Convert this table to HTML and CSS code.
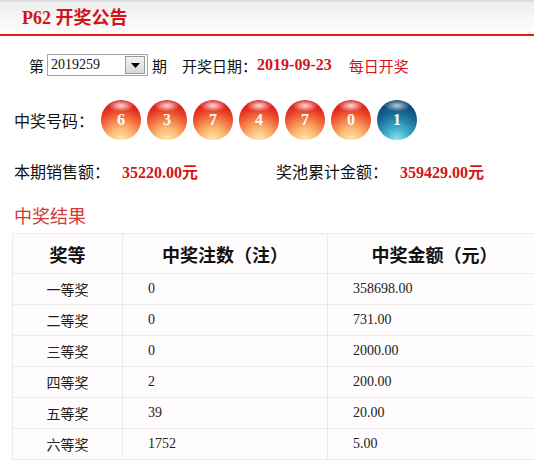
FILE: index.html
```html
<!DOCTYPE html>
<html lang="zh">
<head>
<meta charset="utf-8">
<link rel="stylesheet" href="styles.css">
</head>
<body>
<div class="page">
  <div class="topbar"><h1 class="title">P62 开奖公告</h1></div>
  <div class="issue-row">
    <span class="lbl">第</span>
    <div class="select"><span class="sel-val">2019259</span><span class="sel-btn"><svg width="9" height="5" viewBox="0 0 9 5"><path d="M0 0H9L4.5 5Z" fill="#000"/></svg></span></div>
    <span class="lbl">期</span>
    <span class="lbl date-lbl">开奖日期：</span><span class="date">2019-09-23</span>
    <span class="daily">每日开奖</span>
  </div>
  <div class="balls-row">
    <span class="big-lbl">中奖号码：</span>
    <div class="balls">
      <span class="ball red">6</span>
      <span class="ball red">3</span>
      <span class="ball red">7</span>
      <span class="ball red">4</span>
      <span class="ball red">7</span>
      <span class="ball red">0</span>
      <span class="ball blue">1</span>
    </div>
  </div>
  <div class="money-row">
    <div class="money"><span class="big-lbl">本期销售额：</span><span class="amt">35220.00元</span></div>
    <div class="money pool"><span class="big-lbl">奖池累计金额：</span><span class="amt">359429.00元</span></div>
  </div>
  <h2 class="sub">中奖结果</h2>
  <table class="result">
    <thead>
      <tr><th class="c1">奖等</th><th class="c2">中奖注数（注）</th><th class="c3">中奖金额（元）</th></tr>
    </thead>
    <tbody>
      <tr><td class="c1">一等奖</td><td class="num">0</td><td class="num">358698.00</td></tr>
      <tr><td class="c1">二等奖</td><td class="num">0</td><td class="num">731.00</td></tr>
      <tr><td class="c1">三等奖</td><td class="num">0</td><td class="num">2000.00</td></tr>
      <tr><td class="c1">四等奖</td><td class="num">2</td><td class="num">200.00</td></tr>
      <tr><td class="c1">五等奖</td><td class="num">39</td><td class="num">20.00</td></tr>
      <tr><td class="c1">六等奖</td><td class="num">1752</td><td class="num">5.00</td></tr>
    </tbody>
  </table>
</div>
</body>
</html>
```

FILE: styles.css
```css
html, body {
  margin: 0;
  padding: 0;
  background: #fff;
  overflow: hidden;
}
body {
  font-family: "Liberation Serif", "Noto Sans CJK SC", serif;
  color: #222;
  width: 534px;
}
.page {
  width: 534px;
}
.topbar {
  height: 34px;
  border-bottom: 2px solid #e31d1a;
  background: linear-gradient(#d6d6d6 0, #eeeeee 3px, #f6f6f6 18px, #ffffff 34px);
  display: flex;
  align-items: center;
  padding-left: 22px;
}
.title {
  margin: 0;
  font-size: 18px;
  font-weight: bold;
  color: #d3151a;
  line-height: 1;
  padding-top: 2px;
}
.issue-row {
  display: flex;
  align-items: center;
  height: 22px;
  margin-top: 18px;
  padding-left: 29px;
  font-size: 15px;
}
.lbl {
  color: #111;
}
.select {
  margin: 0 4px 0 3px;
  width: 99px;
  height: 20px;
  border: 1px solid #a5a5a5;
  display: flex;
  align-items: center;
  background: #fff;
}
.sel-val {
  flex: 1;
  padding-left: 3px;
  font-size: 14px;
  color: #111;
}
.sel-btn {
  width: 18px;
  height: 16px;
  margin-right: 2px;
  border: 1px solid #9a9a9a;
  background: linear-gradient(#f4f4f4, #d6d6d6);
  display: flex;
  align-items: center;
  justify-content: center;
}
.date-lbl {
  margin-left: 15px;
}
.date {
  color: #d3151a;
  font-weight: bold;
  font-size: 16px;
}
.daily {
  color: #d3151a;
  margin-left: 17px;
}
.balls-row {
  display: flex;
  align-items: center;
  margin-top: 24px;
  padding-left: 14px;
  height: 40px;
}
.big-lbl {
  font-size: 16px;
  color: #111;
}
.balls {
  display: flex;
  gap: 6px;
  margin-left: 7px;
}
.ball {
  width: 40px;
  height: 40px;
  border-radius: 50%;
  display: flex;
  align-items: center;
  justify-content: center;
  color: #fff;
  font-weight: bold;
  font-size: 16px;
  font-family: "Liberation Serif", serif;
}
.ball.red {
  background:
    radial-gradient(ellipse 13px 6px at 50% 14%, rgba(255,255,255,0.85), rgba(255,255,255,0) 100%),
    radial-gradient(circle at 50% 100%, #ffe9b0 0%, #fbb56f 28%, #ef5a33 58%, #e0221a 78%, #cf1512 100%);
}
.ball.blue {
  background:
    radial-gradient(ellipse 13px 6px at 50% 14%, rgba(255,255,255,0.7), rgba(255,255,255,0) 100%),
    radial-gradient(circle at 50% 100%, #8ee4ef 0%, #3aaec8 28%, #1b6a98 58%, #0e4a7c 80%, #0a3a66 100%);
}
.money-row {
  display: flex;
  align-items: center;
  margin-top: 19px;
  padding-left: 14px;
  height: 24px;
}
.money {
  display: flex;
  align-items: baseline;
}
.pool {
  margin-left: 78px;
}
.amt {
  color: #d3151a;
  font-weight: bold;
  font-size: 16px;
  margin-left: 12px;
}
.sub {
  margin: 20px 0 0 14px;
  font-size: 18px;
  font-weight: normal;
  color: #d03a3a;
  font-family: "Noto Sans CJK SC", sans-serif;
  line-height: 24px;
}
.result {
  margin: 6px 0 0 12px;
  border-collapse: collapse;
  width: 530px;
  background: #fefcfc;
  font-size: 14px;
}
.result th, .result td {
  border: 1px solid #ede9e9;
  padding: 0;
}
.result th {
  height: 39px;
  font-size: 18px;
  font-weight: bold;
  color: #111;
  font-family: "Noto Sans CJK SC", sans-serif;
  text-align: center;
}
.result td {
  height: 30px;
  color: #222;
}
.c1 {
  width: 109px;
  text-align: center;
}
.c2 {
  width: 204px;
}
td.c1 {
  font-family: "Noto Sans CJK SC", sans-serif;
}
td.num {
  padding-left: 25px;
}
```
